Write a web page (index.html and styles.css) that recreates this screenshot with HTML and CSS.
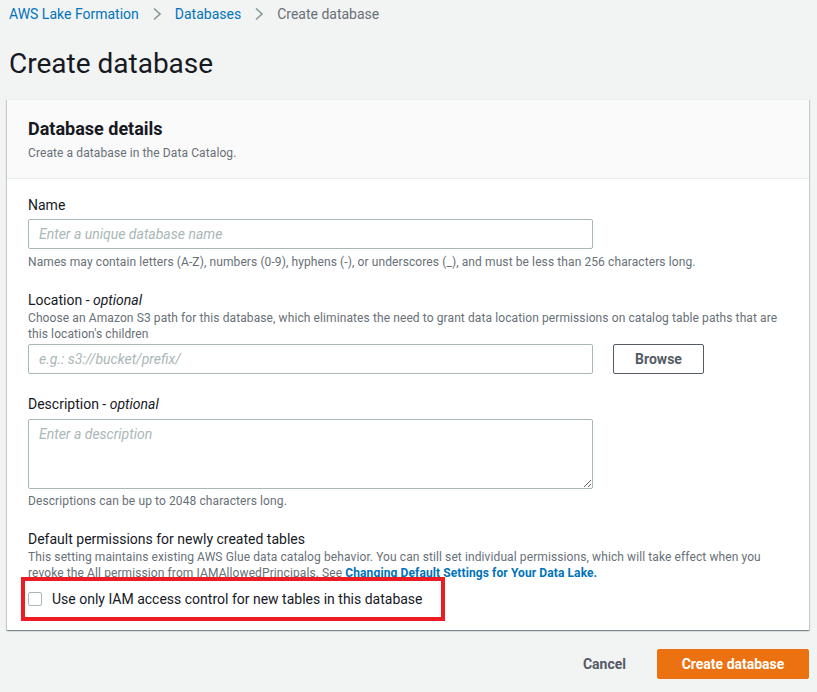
FILE: index.html
```html
<!DOCTYPE html>
<html lang="en">
<head>
<meta charset="utf-8">
<title>Create database</title>
<link rel="stylesheet" href="styles.css">
</head>
<body>
<div class="page">
  <nav class="crumbs">
    <a class="crumb-link" href="#">AWS Lake Formation</a>
    <svg class="chev" width="10" height="14" viewBox="0 0 10 14"><path d="M2 1.5 L8 7 L2 12.5" fill="none" stroke="#879596" stroke-width="1.6"/></svg>
    <a class="crumb-link" href="#">Databases</a>
    <svg class="chev" width="10" height="14" viewBox="0 0 10 14"><path d="M2 1.5 L8 7 L2 12.5" fill="none" stroke="#879596" stroke-width="1.6"/></svg>
    <span class="crumb-current">Create database</span>
  </nav>
  <h1 class="title">Create database</h1>

  <section class="panel">
    <header class="panel-head">
      <h2 class="panel-title">Database details</h2>
      <p class="panel-sub">Create a database in the Data Catalog.</p>
    </header>
    <div class="panel-body">
      <div class="field">
        <label class="label">Name</label>
        <input class="input" type="text" placeholder="Enter a unique database name">
        <p class="help">Names may contain letters (A-Z), numbers (0-9), hyphens (-), or underscores (_), and must be less than 256 characters long.</p>
      </div>

      <div class="field">
        <label class="label">Location - <i>optional</i></label>
        <p class="desc">Choose an Amazon S3 path for this database, which eliminates the need to grant data location permissions on catalog table paths that are this location's children</p>
        <div class="row">
          <input class="input" type="text" placeholder="e.g.: s3://bucket/prefix/">
          <button class="btn-outline" type="button">Browse</button>
        </div>
      </div>

      <div class="field">
        <label class="label">Description - <i>optional</i></label>
        <textarea class="textarea" placeholder="Enter a description"></textarea>
        <p class="help help-tight">Descriptions can be up to 2048 characters long.</p>
      </div>

      <div class="field field-last">
        <label class="label">Default permissions for newly created tables</label>
        <p class="desc">This setting maintains existing AWS Glue data catalog behavior. You can still set individual permissions, which will take effect when you revoke the All permission from IAMAllowedPrincipals. See <a class="link" href="#">Changing Default Settings for Your Data Lake.</a></p>
        <div class="check-row">
          <span class="checkbox"></span>
          <span class="check-label">Use only IAM access control for new tables in this database</span>
          <span class="highlight"></span>
        </div>
      </div>
    </div>
  </section>

  <div class="actions">
    <button class="btn-link" type="button">Cancel</button>
    <button class="btn-primary" type="button">Create database</button>
  </div>
</div>
</body>
</html>
```

FILE: styles.css
```css
* { box-sizing: border-box; }
html, body { margin: 0; padding: 0; }
body {
  background: #f2f3f3;
  font-family: Roboto, "Liberation Sans", sans-serif;
  color: #16191f;
  width: 817px;
  height: 692px;
  overflow: hidden;
}
.page { padding: 0 8px 0 7px; }

.crumbs {
  display: flex;
  align-items: center;
  height: 28px;
  padding-left: 2px;
  font-size: 14px;
}
.crumb-link { color: #0073bb; text-decoration: none; }
.chev { margin: 0 13px 0 13px; }
.crumb-current { color: #687078; }

.title {
  margin: 18px 0 17px;
  padding: 0 0 0 2px;
  font-size: 28px;
  font-weight: 400;
  line-height: 36px;
}

.panel {
  background: #fff;
  box-shadow: 0 1px 1px 0 rgba(0,28,36,.3), 1px 1px 1px 0 rgba(0,28,36,.15), -1px 1px 1px 0 rgba(0,28,36,.15);
  border-top: 1px solid #eaeded;
}
.panel-head {
  background: #fafafa;
  border-bottom: 1px solid #eaeded;
  padding: 18px 21px 17px;
}
.panel-title {
  margin: 0 0 5px;
  font-size: 18px;
  line-height: 22px;
  font-weight: 700;
}
.panel-sub {
  margin: 0;
  font-size: 12px;
  line-height: 16px;
  color: #687078;
  letter-spacing: 0.1px;
}
.panel-body { padding: 16px 21px 21px; }

.field { display: flex; flex-direction: column; margin-bottom: 20px; }
.field-last { margin-bottom: 0; }
.label { font-size: 14px; line-height: 20px; }
.label i { font-style: italic; }
.desc {
  margin: 0 0 2px;
  font-size: 12px;
  line-height: 16px;
  color: #687078;
  letter-spacing: 0.1px;
}
.input {
  width: 565px;
  height: 30px;
  margin-top: 4px;
  border: 1px solid #aab7b8;
  border-radius: 2px;
  padding: 0 10px;
  font: italic 14px Roboto, "Liberation Sans", sans-serif;
  background: #fff;
}
.row .input { margin-top: 0; }
.input::placeholder, .textarea::placeholder { color: #aab7b8; font-style: italic; }
.help {
  margin: 5px 0 0;
  font-size: 12px;
  line-height: 16px;
  color: #687078;
  letter-spacing: 0.1px;
}
.help-tight { margin-top: 4px; }

.row { display: flex; align-items: center; gap: 20px; }
.btn-outline {
  width: 91px;
  height: 30px;
  background: #fff;
  border: 1px solid #545b64;
  border-radius: 2px;
  color: #545b64;
  font: 700 14px Roboto, "Liberation Sans", sans-serif;
}

.textarea {
  width: 565px;
  height: 70px;
  margin-top: 5px;
  border: 1px solid #aab7b8;
  border-radius: 2px;
  padding: 6px 10px;
  font: italic 14px Roboto, "Liberation Sans", sans-serif;
  resize: vertical;
}

.check-row {
  position: relative;
  display: flex;
  align-items: center;
  margin-top: 6px;
  height: 20px;
}
.checkbox {
  width: 14px;
  height: 14px;
  border: 1px solid #aab7b8;
  border-radius: 2px;
  background: #fff;
  margin-right: 10px;
}
.check-label { font-size: 14px; line-height: 20px; }
.highlight {
  position: absolute;
  left: -7px;
  top: -12px;
  width: 424px;
  height: 44px;
  border: 4px solid #ed1c24;
  pointer-events: none;
}

.link { color: #0073bb; font-weight: 700; text-decoration: none; }

.actions {
  display: flex;
  justify-content: flex-end;
  align-items: center;
  margin-top: 19px;
}
.btn-link {
  background: none;
  border: none;
  color: #545b64;
  font: 700 14px Roboto, "Liberation Sans", sans-serif;
  padding: 0 31px 0 20px;
  height: 30px;
}
.btn-primary {
  width: 152px;
  height: 30px;
  background: #ec7211;
  border: 1px solid #ec7211;
  border-radius: 2px;
  color: #fff;
  font: 700 14px Roboto, "Liberation Sans", sans-serif;
}
```
